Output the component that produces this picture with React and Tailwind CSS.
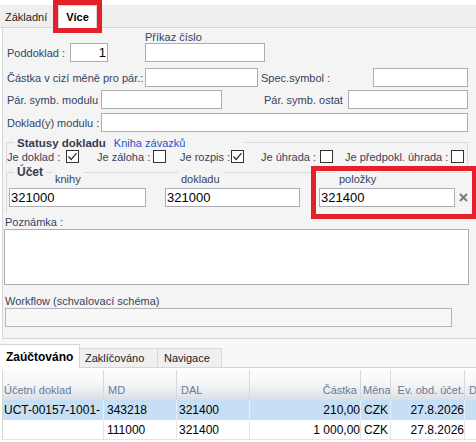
import React from 'react';

const labelCls = 'block text-[11px] leading-[14px] text-[#36435d] whitespace-nowrap shrink-0';

function Box({ className = '', children }) {
  return (
    <div className={`h-[19px] bg-white border border-[#abadb3] shrink-0 flex items-center px-[1px] text-[13px] text-black overflow-hidden whitespace-nowrap ${className}`}>
      {children}
    </div>
  );
}

function Check({ checked }) {
  return (
    <div className="w-[13px] h-[13px] border border-[#333] bg-white shrink-0 flex items-center justify-center">
      {checked && (
        <svg width="11" height="11" viewBox="0 0 11 11">
          <path d="M1.5 5.5 L4.2 8.5 L9.5 2.2" fill="none" stroke="#333" strokeWidth="1.3" />
        </svg>
      )}
    </div>
  );
}

function Cell({ className = '', children }) {
  return (
    <div className={`h-full shrink-0 border-r flex overflow-hidden whitespace-nowrap ${className}`}>
      {children}
    </div>
  );
}

export default function App() {
  return (
    <div className="relative w-[476px] h-[442px] overflow-hidden bg-white font-['Liberation_Sans',Arial,sans-serif]">
      {/* horní záložky */}
      <div className="pt-[5px] bg-white">
        <div className="h-[23px] bg-[#efefef] border-b border-[#d5d5d5] flex items-end">
          <div className="w-[52px] h-[20px] flex items-center pl-[5px] text-[11px] text-[#222]">Základní</div>
          <div className="ml-[6px] w-[39px] h-[23px] -mb-px bg-white border-x border-t border-[#d5d5d5] flex items-center justify-center text-[11px] font-bold text-black">
            Více
          </div>
        </div>
      </div>

      {/* panel Více */}
      <div className="ml-[2px] h-[311px] bg-[#f4f4f4] border-l border-b border-[#d6d6d6] pl-[1px]">
        <div className="flex items-end pt-[2px]">
          <div className="w-[141px] flex items-center">
            <span className={`${labelCls} w-[66px] pl-[3px]`}>Poddoklad :</span>
            <Box className="w-[38px] justify-end pr-[1px]">1</Box>
          </div>
          <div className="flex flex-col">
            <span className={`${labelCls} h-[13px] leading-[13px]`}>Příkaz číslo</span>
            <Box className="w-[120px]" />
          </div>
        </div>

        <div className="flex items-center mt-[6px]">
          <span className={`${labelCls} w-[141px] pl-[3px]`}>Částka v cizí měně pro pár.:</span>
          <Box className="w-[113px]" />
          <span className={`${labelCls} w-[115px] pl-[3px]`}>Spec.symbol :</span>
          <Box className="w-[95px]" />
        </div>

        <div className="flex items-center mt-[3px]">
          <span className={`${labelCls} w-[97px] pl-[3px]`}>Pár. symb. modulu</span>
          <Box className="w-[121px]" />
          <span className={`${labelCls} w-[126px] pl-[42px]`}>Pár. symb. ostat</span>
          <Box className="w-[120px]" />
        </div>

        <div className="flex items-center mt-[4px]">
          <span className={`${labelCls} w-[97px] pl-[3px]`}>Doklad(y) modulu :</span>
          <Box className="w-[367px]" />
        </div>

        {/* Statusy dokladu */}
        <fieldset className="mt-[3px] ml-[2px] w-[462px] border-t border-x border-[#d9d9d9]">
          <legend className="ml-[7px] w-[231px] pl-[3px] h-[14px] leading-[14px] whitespace-nowrap">
            <span className="text-[11.5px] font-bold text-[#333d50]">Statusy dokladu</span>
            <span className="ml-[8px] text-[11px] text-[#1a56c8]">Kniha závazků</span>
          </legend>
          <div className="flex items-center h-[15px]">
            <span className={`${labelCls} w-[59px]`}>Je doklad :</span>
            <Check checked />
            <span className={`${labelCls} ml-[18px] w-[56px]`}>Je záloha :</span>
            <Check />
            <span className={`${labelCls} ml-[14px] w-[51px]`}>Je rozpis :</span>
            <Check checked />
            <span className={`${labelCls} ml-[17px] w-[59px]`}>Je úhrada :</span>
            <Check />
            <span className={`${labelCls} ml-[12px] w-[106px]`}>Je předpokl. úhrada :</span>
            <Check />
          </div>
        </fieldset>

        {/* Účet */}
        <fieldset className="mt-[1px] ml-[2px] w-[462px] border-t border-l border-[#d9d9d9] pb-[6px]">
          <legend className="ml-[7px] px-[3px] h-[14px] leading-[14px] text-[12px] font-bold text-[#333d50]">Účet</legend>
          <div className="flex items-start">
            <div className="ml-[2px] w-[137px] flex flex-col shrink-0">
              <span className={`${labelCls} -mt-[7px] ml-[43px] self-start px-[3px] bg-[#f4f4f4] text-[#4c5873]`}>knihy</span>
              <Box className="mt-[2px] w-[137px]">321000</Box>
            </div>
            <div className="ml-[19px] w-[135px] flex flex-col shrink-0">
              <span className={`${labelCls} -mt-[7px] ml-[13px] self-start px-[3px] bg-[#f4f4f4] text-[#4c5873]`}>dokladu</span>
              <Box className="mt-[2px] w-[135px]">321000</Box>
            </div>
            <div className="ml-[19px] flex flex-col shrink-0">
              <span className={`${labelCls} -mt-[7px] ml-[17px] self-start px-[3px] bg-[#f4f4f4] text-[#4c5873]`}>položky</span>
              <div className="mt-[2px] flex items-center">
                <Box className="w-[136px]">321400</Box>
                <svg className="ml-[4px]" width="9" height="9" viewBox="0 0 9 9">
                  <path d="M1 1 L8 8 M8 1 L1 8" stroke="#7b7b7b" strokeWidth="2" />
                </svg>
              </div>
            </div>
          </div>
        </fieldset>

        <div className={`${labelCls} mt-[2px] pl-[1px]`}>Poznámka :</div>
        <div className="w-[465px] h-[56px] bg-white border border-[#abadb3]" />

        <div className={`${labelCls} mt-[9px] pl-[1px]`}>Workflow (schvalovací schéma)</div>
        <div className="ml-[1px] w-[447px] h-[19px] bg-[#f7f7f7] border border-[#b4b4b4]" />
      </div>

      {/* spodní záložky */}
      <div className="h-[29px] bg-[#f8f8f8] border-b border-[#d6d6d6] flex items-end">
        <div className="w-[80px] h-[24px] -mb-px bg-white border-r border-t border-[#d6d6d6] flex items-center pl-[6px] text-[12px] font-bold text-black">
          Zaúčtováno
        </div>
        <div className="w-[78px] h-[19px] bg-[#f0f0f0] border-t border-r border-[#d9d9d9] flex items-center pl-[5px] text-[11px] text-[#222]">
          Zaklíčováno
        </div>
        <div className="w-[64px] h-[19px] bg-[#f0f0f0] border-t border-r border-[#d9d9d9] flex items-center pl-[6px] text-[11px] text-[#222]">
          Navigace
        </div>
      </div>

      {/* mřížka */}
      <div className="mt-[2px] ml-[2px] border-l border-[#d6d6d6]">
        <div className="flex h-[30px] bg-gradient-to-b from-[#fdfdfd] via-[#f4f5f7] to-[#d9dfe8] text-[11px] text-[#6c7a92]">
          <Cell className="w-[101px] border-[#d5d9e0] items-end pb-[2px] pl-[1px]">Účetní doklad</Cell>
          <Cell className="w-[73px] border-[#d5d9e0] items-end pb-[2px] pl-[4px]">MD</Cell>
          <Cell className="w-[73px] border-[#d5d9e0] items-end pb-[2px] pl-[4px]">DAL</Cell>
          <Cell className="w-[111px] border-[#d5d9e0] items-end justify-end pb-[2px] pr-[3px]">Částka</Cell>
          <Cell className="w-[30px] border-[#d5d9e0] items-end pb-[2px] pl-[2px]">Měna</Cell>
          <Cell className="w-[74px] border-[#d5d9e0] items-end justify-end pb-[2px]">Ev. obd. účet.</Cell>
          <Cell className="w-[20px] border-[#d5d9e0] items-end pb-[2px] pl-[4px]">D</Cell>
        </div>
        <div className="flex h-[20px] bg-[#c6dff4] text-[12px] text-black">
          <Cell className="w-[101px] border-[#e6f0fa] items-center pl-[1px]">UCT-00157-1001-</Cell>
          <Cell className="w-[73px] border-[#e6f0fa] items-center pl-[3px]">343218</Cell>
          <Cell className="w-[73px] border-[#e6f0fa] items-center pl-[2px]">321400</Cell>
          <Cell className="w-[111px] border-[#e6f0fa] items-center justify-end">210,00</Cell>
          <Cell className="w-[30px] border-[#e6f0fa] items-center pl-[3px]">CZK</Cell>
          <Cell className="w-[74px] border-[#e6f0fa] items-center justify-end">27.8.2026</Cell>
          <Cell className="w-[20px] border-[#e6f0fa] items-center" />
        </div>
        <div className="flex h-[20px] bg-white text-[12px] text-black border-b border-[#e4e4e4]">
          <Cell className="w-[101px] border-[#e4e4e4] items-center pl-[1px]" />
          <Cell className="w-[73px] border-[#e4e4e4] items-center pl-[3px]">111000</Cell>
          <Cell className="w-[73px] border-[#e4e4e4] items-center pl-[2px]">321400</Cell>
          <Cell className="w-[111px] border-[#e4e4e4] items-center justify-end">1 000,00</Cell>
          <Cell className="w-[30px] border-[#e4e4e4] items-center pl-[3px]">CZK</Cell>
          <Cell className="w-[74px] border-[#e4e4e4] items-center justify-end">27.8.2026</Cell>
          <Cell className="w-[20px] border-[#e4e4e4] items-center" />
        </div>
      </div>

      {/* zvýraznění */}
      <div className="absolute left-[53px] top-0 w-[49px] h-[33px] border-[5px] border-[#e5202a]" />
      <div className="absolute left-[311px] top-[166px] w-[166px] h-[53px] border-[5px] border-[#e5202a]" />
    </div>
  );
}
